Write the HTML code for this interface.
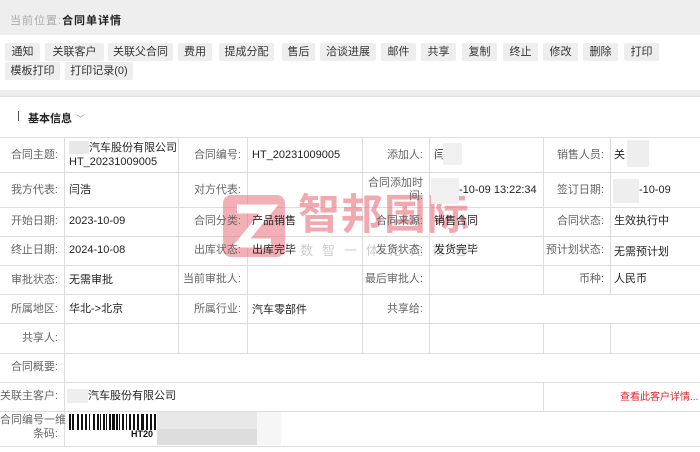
<!DOCTYPE html>
<html><head><meta charset="utf-8"><style>
*{margin:0;padding:0;box-sizing:border-box}
body{width:700px;height:452px;overflow:hidden;background:#fff;font-family:"Liberation Sans","Noto Sans CJK SC",sans-serif;font-size:11px;color:#333;position:relative}
.hdr{position:absolute;left:0;top:0;width:700px;height:35px;background:#eee;}
.hdr span{position:absolute;left:10px;top:12px;font-size:11px;color:#aaa;letter-spacing:1px}
.hdr b{color:#222;font-weight:bold}
.btn{position:absolute;height:18px;background:#eee;color:#333;font-size:11px;line-height:18px;text-align:center;border-radius:2px}
.sep{position:absolute;left:0;top:90px;width:700px;height:7px;background:#eee;border-bottom:1px solid #ddd}
.title{position:absolute;left:28px;top:110px;font-size:11px;font-weight:bold;color:#222}
.title i{font-style:normal;font-weight:normal;color:#999;margin-left:4px;font-size:9px}
.bar{position:absolute;left:18px;top:111px;width:1px;height:10px;background:#555}
.ln{position:absolute;background:#ddd}
.t{position:absolute;font-size:11px;line-height:13px;white-space:nowrap}
.l{color:#666;text-align:right}
.v{color:#222}
</style></head><body>
<div class="hdr"><span>当前位置:<b>合同单详情</b></span></div>
<div class="btn" style="left:5px;top:43px;width:35px">通知</div>
<div class="btn" style="left:45px;top:43px;width:59px">关联客户</div>
<div class="btn" style="left:108px;top:43px;width:65px">关联父合同</div>
<div class="btn" style="left:178px;top:43px;width:34px">费用</div>
<div class="btn" style="left:219px;top:43px;width:55px">提成分配</div>
<div class="btn" style="left:282px;top:43px;width:33px">售后</div>
<div class="btn" style="left:320px;top:43px;width:56px">洽谈进展</div>
<div class="btn" style="left:381px;top:43px;width:35px">邮件</div>
<div class="btn" style="left:421px;top:43px;width:35px">共享</div>
<div class="btn" style="left:462px;top:43px;width:35px">复制</div>
<div class="btn" style="left:503px;top:43px;width:35px">终止</div>
<div class="btn" style="left:543px;top:43px;width:35px">修改</div>
<div class="btn" style="left:583px;top:43px;width:35px">删除</div>
<div class="btn" style="left:624px;top:43px;width:35px">打印</div>
<div class="btn" style="left:5px;top:62px;width:55px">模板打印</div>
<div class="btn" style="left:65px;top:62px;width:68px">打印记录(0)</div>
<div class="sep"></div>
<div class="bar"></div>
<div class="title">基本信息<i>﹀</i></div>

<div class="ln" style="left:0;top:137px;width:700px;height:1px"></div>
<div class="ln" style="left:0;top:172px;width:700px;height:1px"></div>
<div class="ln" style="left:0;top:207px;width:700px;height:1px"></div>
<div class="ln" style="left:0;top:236px;width:700px;height:1px"></div>
<div class="ln" style="left:0;top:265px;width:700px;height:1px"></div>
<div class="ln" style="left:0;top:294px;width:700px;height:1px"></div>
<div class="ln" style="left:0;top:323px;width:700px;height:1px"></div>
<div class="ln" style="left:0;top:353px;width:700px;height:1px"></div>
<div class="ln" style="left:0;top:382px;width:700px;height:1px"></div>
<div class="ln" style="left:0;top:411px;width:700px;height:1px"></div>
<div class="ln" style="left:0;top:446px;width:700px;height:1px"></div>
<div class="ln" style="left:64px;top:137px;width:1px;height:309px"></div>
<div class="ln" style="left:178px;top:137px;width:1px;height:216px"></div>
<div class="ln" style="left:247px;top:137px;width:1px;height:216px"></div>
<div class="ln" style="left:362px;top:137px;width:1px;height:216px"></div>
<div class="ln" style="left:429px;top:137px;width:1px;height:216px"></div>
<div class="ln" style="left:543px;top:137px;width:1px;height:157px"></div>
<div class="ln" style="left:610px;top:137px;width:1px;height:157px"></div>
<div class="ln" style="left:543px;top:323px;width:1px;height:30px"></div>
<div class="ln" style="left:610px;top:323px;width:1px;height:30px"></div>
<div class="ln" style="left:543px;top:382px;width:1px;height:29px"></div>

<div style="position:absolute;left:223px;top:195px;width:62px;height:62px;background:rgba(232,110,120,0.55);border-radius:8px"></div>
<svg style="position:absolute;left:223px;top:195px" width="62" height="62"><path d="M14 14H46L18 48H48" stroke="#fff" stroke-width="9" fill="none"/></svg>
<div class="t" style="left:298px;top:192px;font-size:42px;line-height:46px;font-weight:bold;color:rgba(232,110,120,0.6);letter-spacing:1px">智邦国际</div>
<div class="t" style="left:300px;top:243px;font-size:13px;line-height:15px;color:rgba(170,170,170,0.6);letter-spacing:9px">数智一体化先行者</div>

<div class="t l" style="left:0;width:58px;top:149px">合同主题:</div>
<div style="position:absolute;left:69px;top:141px;width:20px;height:13px;background:#e8e8e8"></div>
<div class="t v" style="left:89px;top:142px">汽车股份有限公司</div>
<div class="t v" style="left:69px;top:156px">HT_20231009005</div>
<div class="t l" style="left:178px;width:63px;top:149px">合同编号:</div>
<div class="t v" style="left:252px;top:149px">HT_20231009005</div>
<div class="t l" style="left:362px;width:61px;top:149px">添加人:</div>
<div class="t v" style="left:434px;top:149px">闫</div>
<div style="position:absolute;left:443px;top:143px;width:19px;height:22px;background:#f0f0f0"></div>
<div class="t l" style="left:543px;width:61px;top:149px">销售人员:</div>
<div class="t v" style="left:614px;top:149px">关</div>
<div style="position:absolute;left:627px;top:140px;width:22px;height:27px;background:#eee"></div>
<div class="t l" style="left:0;width:58px;top:184px">我方代表:</div>
<div class="t v" style="left:69px;top:184px">闫浩</div>
<div class="t l" style="left:178px;width:63px;top:184px">对方代表:</div>
<div class="t l" style="left:362px;width:61px;top:177px">合同添加时</div>
<div class="t l" style="left:362px;width:61px;top:190px">间:</div>
<div style="position:absolute;left:431px;top:178px;width:28px;height:26px;background:#f0f0f0"></div>
<div class="t v" style="left:459px;top:184px">-10-09 13:22:34</div>
<div class="t l" style="left:543px;width:61px;top:184px">签订日期:</div>
<div style="position:absolute;left:613px;top:179px;width:26px;height:24px;background:#eee"></div>
<div class="t v" style="left:639px;top:184px">-10-09</div>
<div class="t l" style="left:0;width:58px;top:215px">开始日期:</div>
<div class="t v" style="left:69px;top:215px">2023-10-09</div>
<div class="t l" style="left:178px;width:63px;top:215px">合同分类:</div>
<div class="t v" style="left:252px;top:215px">产品销售</div>
<div class="t l" style="left:362px;width:61px;top:215px">合同来源:</div>
<div class="t v" style="left:434px;top:215px">销售合同</div>
<div class="t l" style="left:543px;width:61px;top:215px">合同状态:</div>
<div class="t v" style="left:614px;top:215px">生效执行中</div>
<div class="t l" style="left:0;width:58px;top:244px">终止日期:</div>
<div class="t v" style="left:69px;top:244px">2024-10-08</div>
<div class="t l" style="left:178px;width:63px;top:244px">出库状态:</div>
<div class="t v" style="left:252px;top:244px">出库完毕</div>
<div class="t l" style="left:362px;width:61px;top:244px">发货状态:</div>
<div class="t v" style="left:434px;top:244px">发货完毕</div>
<div class="t l" style="left:543px;width:61px;top:244px">预计划状态:</div>
<div class="t v" style="left:614px;top:246px">无需预计划</div>
<div class="t l" style="left:0;width:58px;top:274px">审批状态:</div>
<div class="t v" style="left:69px;top:274px">无需审批</div>
<div class="t l" style="left:178px;width:63px;top:273px">当前审批人:</div>
<div class="t l" style="left:362px;width:61px;top:273px">最后审批人:</div>
<div class="t l" style="left:543px;width:61px;top:273px">币种:</div>
<div class="t v" style="left:614px;top:273px">人民币</div>
<div class="t l" style="left:0;width:58px;top:303px">所属地区:</div>
<div class="t v" style="left:69px;top:303px">华北-&gt;北京</div>
<div class="t l" style="left:178px;width:63px;top:303px">所属行业:</div>
<div class="t v" style="left:252px;top:304px">汽车零部件</div>
<div class="t l" style="left:362px;width:61px;top:303px">共享给:</div>
<div class="t l" style="left:0;width:58px;top:332px">共享人:</div>
<div class="t l" style="left:0;width:58px;top:361px">合同概要:</div>
<div class="t l" style="left:0;width:58px;top:390px">关联主客户:</div>
<div style="position:absolute;left:67px;top:389px;width:21px;height:14px;background:#eee"></div>
<div class="t v" style="left:88px;top:390px">汽车股份有限公司</div>
<div class="t" style="left:620px;top:391px;font-size:10px;color:#e8202a">查看此客户详情...</div>
<div class="t l" style="left:0;width:58px;top:414px">合同编号一维</div>
<div class="t l" style="left:0;width:58px;top:428px">条码:</div>
<svg style="position:absolute;left:69px;top:414px" width="90" height="24">
<g fill="#111"><rect x="0" y="0" width="2" height="16"/><rect x="3" y="0" width="2" height="16"/><rect x="8" y="0" width="2" height="16"/><rect x="12" y="0" width="2" height="16"/><rect x="16" y="0" width="2" height="16"/><rect x="20" y="0" width="1" height="16"/><rect x="24" y="0" width="2" height="16"/><rect x="28" y="0" width="2" height="16"/><rect x="31" y="0" width="1" height="16"/><rect x="34" y="0" width="2" height="16"/><rect x="37" y="0" width="1" height="16"/><rect x="40" y="0" width="2" height="16"/><rect x="43" y="0" width="3" height="16"/><rect x="47" y="0" width="2" height="16"/><rect x="50" y="0" width="1" height="16"/><rect x="53" y="0" width="2" height="16"/><rect x="57" y="0" width="1" height="16"/><rect x="60" y="0" width="2" height="16"/><rect x="64" y="0" width="2" height="16"/><rect x="68" y="0" width="2" height="16"/><rect x="72" y="0" width="3" height="16"/><rect x="77" y="0" width="2" height="16"/><rect x="81" y="0" width="2" height="16"/><rect x="85" y="0" width="2" height="16"/></g>
<text x="62" y="23" font-size="9" font-weight="bold" font-family="Liberation Sans" fill="#111">HT20</text></svg>
<div style="position:absolute;left:157px;top:412px;width:100px;height:22px;background:#e8e8e8"></div>
<div style="position:absolute;left:157px;top:429px;width:100px;height:16px;background:#ddd"></div>
<div style="position:absolute;left:257px;top:412px;width:24px;height:33px;background:#f6f6f6"></div>
</body></html>
